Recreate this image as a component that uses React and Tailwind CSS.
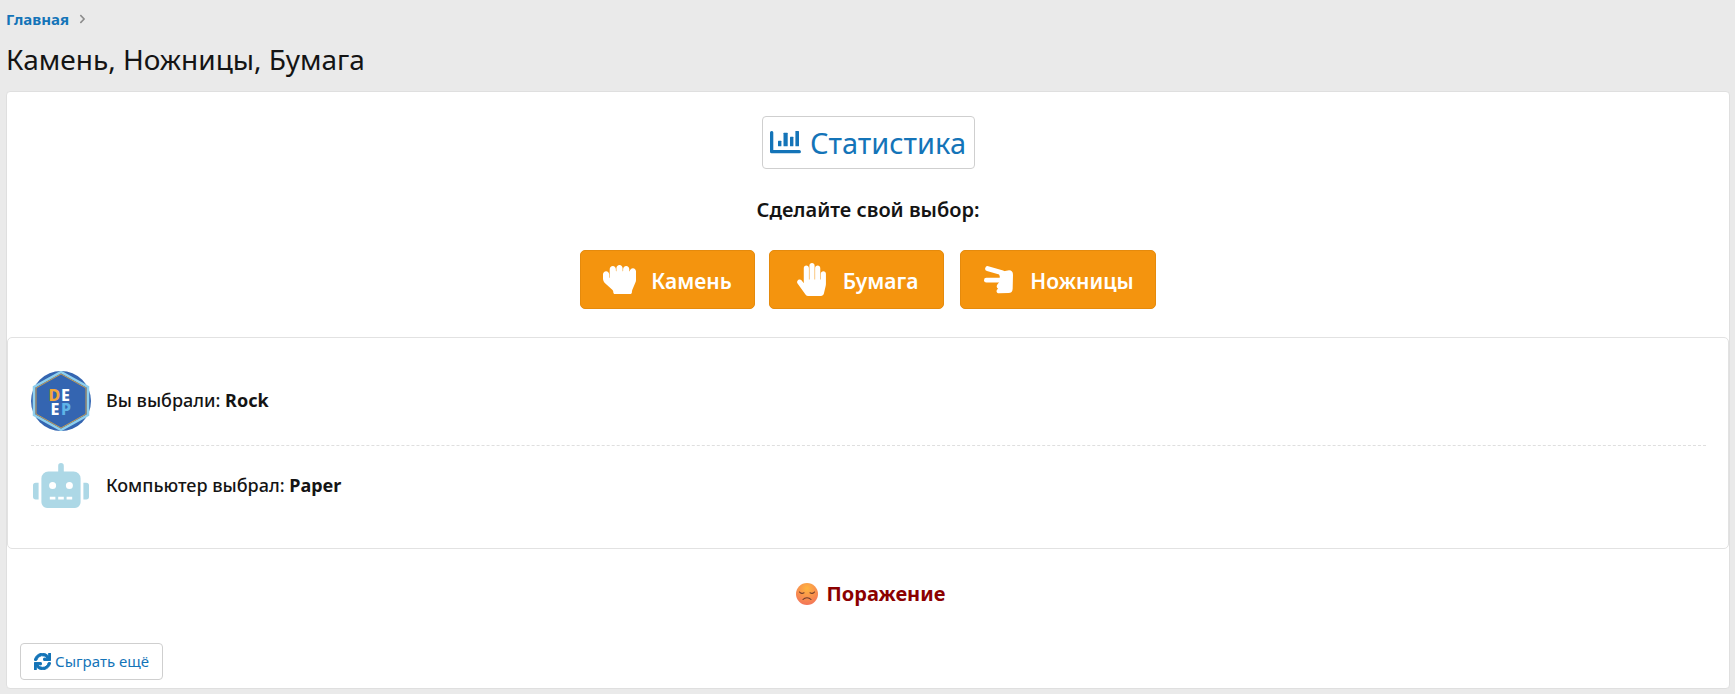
import React from 'react';
import { FaChevronRight, FaHandRock, FaHandPaper, FaRobot, FaSync } from 'react-icons/fa';

const font = "font-['Noto_Sans','Open_Sans',sans-serif]";

const ChartIcon = () => (
  <svg viewBox="0 0 31 23" className="w-[31px] h-[23px] shrink-0" fill="currentColor">
    <path d="M1.6 0h0a1.6 1.6 0 0 1 1.7 1.6V19h26a1.6 1.6 0 0 1 0 3.3H1.6A1.6 1.6 0 0 1 0 20.7V1.6A1.6 1.6 0 0 1 1.6 0z" />
    <rect x="8" y="9.7" width="3.4" height="5.6" rx="0.5" />
    <rect x="13.5" y="1.7" width="4.2" height="13.6" rx="0.5" />
    <rect x="20" y="5.7" width="3.4" height="9.6" rx="0.5" />
    <rect x="25.4" y="0" width="3.6" height="15.3" rx="0.5" />
  </svg>
);

const ScissorsIcon = () => (
  <svg viewBox="20 15 92 85" className="w-[31px] h-[28px] mx-px shrink-0" fill="currentColor">
    <line x1="33" y1="23" x2="78" y2="36" stroke="currentColor" strokeWidth="15" strokeLinecap="round" />
    <line x1="29" y1="58" x2="72" y2="58" stroke="currentColor" strokeWidth="14" strokeLinecap="round" />
    <path d="M66 34 L98 28 Q110 28 110 42 L109 84 Q109 97 96 97 L68 98 Q60 98 60 91 Q60 86 65 84 Q58 80 62 72 L68 64 L70 48 Z" />
  </svg>
);

const moves = [
  { icon: <FaHandRock className="w-[33px] h-[33px]" />, label: 'Камень', width: 'w-[175px]' },
  { icon: <FaHandPaper className="w-[33px] h-[33px]" />, label: 'Бумага', width: 'w-[175px]' },
  { icon: <ScissorsIcon />, label: 'Ножницы', width: 'w-[196px] ml-[2px]' },
];

const DeepLogo = () => (
  <svg viewBox="0 0 60 60" className="w-[60px] h-[60px] shrink-0">
    <circle cx="30" cy="30" r="30" fill="#3465b1" />
    <polygon points="30,1 57,16 57,44 30,59 3,44 3,16" fill="none" stroke="#8fd0ee" strokeWidth="2.5" />
    <polygon points="30,3 55,17 55,43 30,57 5,43 5,17" fill="#3465b1" stroke="#e8a93c" strokeWidth="0.8" />
    <text x="17.5" y="30" fontFamily="Noto Sans" fontWeight="800" fontSize="16" fill="#f3a83b">D</text>
    <text x="30" y="30" fontFamily="Noto Sans" fontWeight="800" fontSize="16" fill="#ffffff">E</text>
    <text x="19.5" y="44" fontFamily="Noto Sans" fontWeight="800" fontSize="16" fill="#ffffff">E</text>
    <text x="30" y="44" fontFamily="Noto Sans" fontWeight="800" fontSize="16" fill="#5fb4e8">P</text>
  </svg>
);

const SadFace = () => (
  <svg viewBox="0 0 22 22" className="w-[22px] h-[22px]">
    <defs>
      <radialGradient id="sad" cx="50%" cy="25%" r="80%">
        <stop offset="0%" stopColor="#ffb53f" />
        <stop offset="100%" stopColor="#f2705a" />
      </radialGradient>
    </defs>
    <circle cx="11" cy="11" r="11" fill="url(#sad)" />
    <path d="M3.5 9c1 1.4 3 1.6 4.5.8M18.5 9c-1 1.4-3 1.6-4.5.8M7 16.5c2-2.4 6-2.4 8 0" fill="none" stroke="#6b3a2a" strokeWidth="1.1" strokeLinecap="round" />
  </svg>
);

export default function App() {
  return (
    <div className={`${font} bg-[#eaeaea] text-[#141414] h-[694px] pl-[6px] pr-[5px] overflow-hidden`}>
      <div className="h-[38px] flex items-center gap-[9px] text-[15px] font-bold text-[#1474b8]">
        <span>Главная</span>
        <FaChevronRight className="text-[#8c8c8c] w-[9px] h-[10px]" />
      </div>
      <h1 className="h-[53px] pt-[5px] text-[28px] leading-[32px] font-normal">Камень, Ножницы, Бумага</h1>

      <div className="bg-white border border-[#dfdfdf] rounded-[4px] h-[598px] flex flex-col">
        <div className="flex justify-center pt-[24px]">
          <button className="w-[213px] h-[53px] border border-[#cfcfcf] rounded-[4px] flex items-center justify-center gap-[9px] text-[#1474b8] text-[29px]">
            <ChartIcon />
            <span>Статистика</span>
          </button>
        </div>
        <div className="text-center font-semibold text-[20px] leading-[24px] mt-[29px]">Сделайте свой выбор:</div>
        <div className="flex justify-center gap-[14px] mt-[28px]">
          {moves.map((move) => (
            <button
              key={move.label}
              className={`${move.width} h-[59px] bg-[#f4940e] border border-[#e58a0c] rounded-[5px] flex items-center justify-center gap-[15px] text-white font-semibold text-[21px]`}
            >
              {move.icon}
              <span className="pt-[4px]">{move.label}</span>
            </button>
          ))}
        </div>

        <div className="mt-[28px] border border-[#e2e2e2] rounded-[5px] h-[212px] pl-[23px] pr-[22px] pt-[33px]">
          <div className="flex items-center gap-[15px] h-[60px] text-[18px] leading-[24px] font-medium">
            <DeepLogo />
            <div className="pb-[2px]">Вы выбрали: <b>Rock</b></div>
          </div>
          <div className="border-t border-dashed border-[#dfdfdf] mt-[14px]" />
          <div className="flex items-center gap-[15px] h-[60px] mt-[9px] text-[18px] leading-[24px] font-medium">
            <div className="w-[60px] flex justify-center shrink-0">
              <FaRobot className="w-[56px] h-[45px] text-[#add8e6]" />
            </div>
            <div>Компьютер выбрал: <b>Paper</b></div>
          </div>
        </div>

        <div className="flex justify-center items-center gap-[9px] mt-[31px] h-[28px] pl-[5px] text-[20px] font-bold text-[#8b0000]">
          <SadFace />
          <span>Поражение</span>
        </div>

        <div className="pl-[13px] mt-[35px]">
          <button className="w-[143px] h-[37px] border border-[#cfcfcf] rounded-[4px] flex items-center justify-center gap-[4px] text-[#1474b8] text-[15px]">
            <FaSync className="w-[17px] h-[17px]" strokeWidth={30} />
            <span>Сыграть ещё</span>
          </button>
        </div>
      </div>
    </div>
  );
}
